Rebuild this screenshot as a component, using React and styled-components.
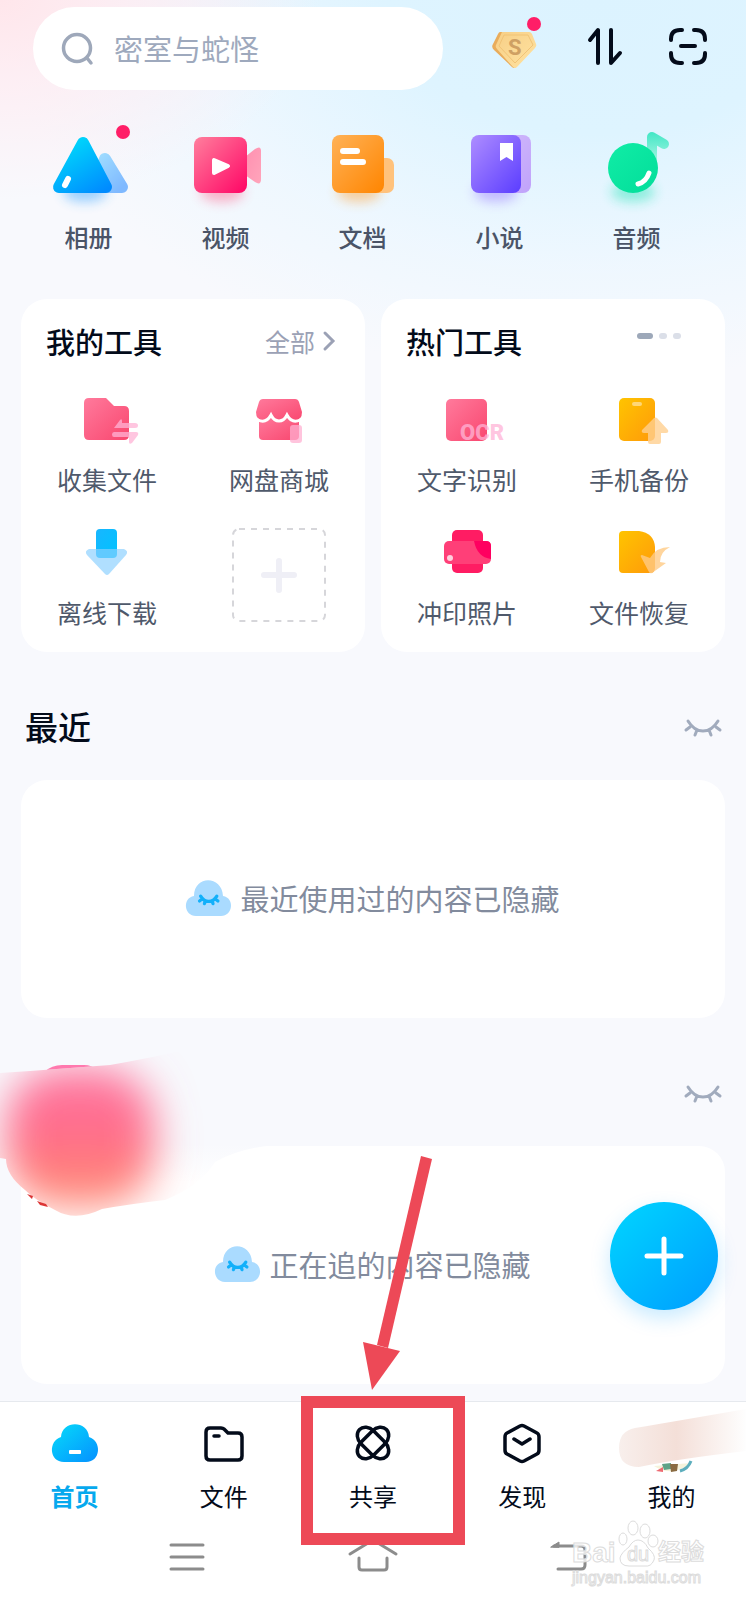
import React from 'react';
import styled, { createGlobalStyle } from 'styled-components';

const GlobalStyle = createGlobalStyle`
  * {
    box-sizing: border-box;
  }

  body {
    margin: 0;
    background: #f8f9fd;
    font-family: 'Noto Sans CJK SC', 'Liberation Sans', sans-serif;
    color: #030b1a;
  }

  button,
  input {
    margin: 0;
    padding: 0;
    border: 0;
    background: none;
    font-family: inherit;
    color: inherit;
  }

  svg {
    display: block;
    flex-shrink: 0;
    overflow: visible;
  }
`;

const Page = styled.div`
  min-height: 100vh;
  display: flex;
  flex-direction: column;
  background:
    radial-gradient(ellipse 320px 200px at 0 0, #ffe6eb 0%, rgba(255, 235, 241, 0.75) 40%, rgba(250, 246, 251, 0) 100%) no-repeat,
    radial-gradient(ellipse 80% 380px at 80% 0, #dcf3ff 0%, #def4ff 35%, rgba(236, 247, 255, 0.8) 70%, rgba(248, 249, 253, 0) 100%) no-repeat,
    #f8f9fd;
`;

const Header = styled.header`
  padding: 7px 39px 0 33px;
  display: flex;
  align-items: center;
`;

const SearchBox = styled.label`
  height: 83px;
  margin-right: 44px;
  padding: 0 28px;
  flex: 1;
  display: flex;
  align-items: center;
  gap: 19px;
  border-radius: 42px;
  background: white;
`;

const SearchInput = styled.input`
  width: 100%;
  min-width: 0;
  height: 42px;
  padding-bottom: 2px;
  outline: none;
  font-size: 29px;

  &::placeholder {
    color: #9ea9bd;
    opacity: 1;
  }
`;

const HeaderActions = styled.div`
  display: flex;
  gap: 45px;
`;

const IconButton = styled.button`
  display: block;
  cursor: pointer;
`;

const Categories = styled.nav`
  padding: 33px 41px 0 20px;
  display: grid;
  grid-template-columns: repeat(5, 1fr);
`;

const CategoryLink = styled.a`
  display: flex;
  flex-direction: column;
  align-items: center;
  gap: 15px;
  font-size: 24px;
  line-height: 30px;
  font-weight: 500;
  color: #4a5467;
  text-decoration: none;
`;

const ToolCards = styled.div`
  padding: 47px 21px 0;
  display: grid;
  grid-template-columns: 1fr 1fr;
  gap: 16px;
`;

const ToolCard = styled.section`
  padding: 24px 0 25px;
  border-radius: 26px;
  background: white;
`;

const ToolCardHeader = styled.div`
  height: 36px;
  padding: 0 ${(props) => props.$right}px 0 25px;
  display: flex;
  align-items: center;
  justify-content: space-between;
`;

const ToolCardTitle = styled.h2`
  margin: 0;
  font-size: 29px;
  line-height: 36px;
  font-weight: 500;
`;

const AllLink = styled.a`
  display: flex;
  align-items: center;
  gap: 8px;
  font-size: 25px;
  line-height: 36px;
  color: #9ba1b5;
  text-decoration: none;
`;

const PageDots = styled.div`
  height: 26px;
  display: flex;
  align-items: center;
  align-self: flex-start;
  gap: 6px;
`;

const PageDot = styled.span`
  width: ${(props) => (props.$active ? 16 : 8)}px;
  height: 6px;
  border-radius: 3px;
  background: ${(props) => (props.$active ? '#9da8b9' : '#dbdfe8')};
`;

const ToolGrid = styled.div`
  margin-top: 31px;
  display: grid;
  grid-template-columns: 1fr 1fr;
  row-gap: 29px;
  justify-items: center;
`;

const ToolLink = styled.a`
  display: flex;
  flex-direction: column;
  align-items: center;
  gap: 14px;
  font-size: 25px;
  line-height: 30px;
  color: #4f596b;
  text-decoration: none;
`;

const AddTool = styled.button`
  width: 94px;
  height: 94px;
  margin-top: 5px;
  cursor: pointer;
`;

const Section = styled.section`
  position: relative;
  padding: 56px 21px 0;
`;

const SectionHeader = styled.div`
  min-height: 40px;
  margin-bottom: 32px;
  padding: 0 4px;
  display: flex;
  align-items: center;
  justify-content: space-between;
`;

const SectionTitle = styled.h2`
  margin: 0;
  align-self: flex-start;
  font-size: 33px;
  line-height: 36px;
  font-weight: 500;
`;

const HiddenCard = styled.div`
  height: 238px;
  padding-bottom: 2px;
  display: flex;
  align-items: center;
  justify-content: center;
  gap: 9px;
  border-radius: 26px;
  background: white;
  font-size: 29px;
  color: #828b9d;
`;

const Blob = styled.svg`
  position: absolute;
  left: 0;
  top: 42px;
`;

const AddButton = styled.button`
  position: fixed;
  right: 28px;
  bottom: 290px;
  width: 108px;
  height: 108px;
  display: flex;
  align-items: center;
  justify-content: center;
  border-radius: 50%;
  background: linear-gradient(135deg, #00d0ff 10%, #00a2ff 90%);
  box-shadow: 0 8px 20px rgba(0, 160, 255, 0.22);
  cursor: pointer;
`;

const BottomBar = styled.footer`
  position: relative;
  margin-top: auto;
  padding-bottom: 21px;
  border-top: 1px solid #e6e9ee;
  background: white;
`;

const Tabs = styled.nav`
  padding: 21px 0 24px;
  display: grid;
  grid-template-columns: repeat(5, 1fr);
`;

const TabLink = styled.a`
  position: relative;
  display: flex;
  flex-direction: column;
  align-items: center;
  gap: 18px;
  font-size: 24px;
  line-height: 30px;
  font-weight: ${(props) => (props.$active ? 700 : 400)};
  color: ${(props) => (props.$active ? '#06a9ee' : '#030b1a')};
  text-decoration: none;
`;

const Pointer = styled.svg`
  position: absolute;
  left: calc(50% - 72px);
  bottom: -34px;
  z-index: 2;
  pointer-events: none;
`;

const SystemBar = styled.div`
  padding: 0 94px;
  display: grid;
  grid-template-columns: repeat(3, 1fr);
  justify-items: center;
`;

const Watermark = styled.svg`
  position: absolute;
  right: 36px;
  bottom: 14px;
  pointer-events: none;
`;

const Gradient = ({ id, from, to }) => (
  <linearGradient id={id} x1="0" y1="0" x2="1" y2="1">
    <stop offset="0" stopColor={from} />
    <stop offset="1" stopColor={to} />
  </linearGradient>
);

const Defs = styled.svg`
  position: absolute;
`;

const Gradients = () => (
  <Defs width="0" height="0" aria-hidden="true">
    <defs>
      <linearGradient id="sky" gradientUnits="userSpaceOnUse" x1="25" y1="20" x2="56" y2="70">
        <stop offset="0" stopColor="#00d5fb" />
        <stop offset="1" stopColor="#008bff" />
      </linearGradient>
      <Gradient id="skyPale" from="#9fdcff" to="#7fb9ff" />
      <Gradient id="rose" from="#ff7f9d" to="#ff0565" />
      <Gradient id="roseSoft" from="#ff7a9c" to="#f9476f" />
      <Gradient id="rosePale" from="#ff8fb0" to="#ffa5bb" />
      <Gradient id="orange" from="#ffb257" to="#ff8500" />
      <Gradient id="violet" from="#ae8dff" to="#5b3dff" />
      <Gradient id="violetPale" from="#d2bdfb" to="#c0a2fb" />
      <Gradient id="mint" from="#10eda6" to="#03dd9a" />
      <linearGradient id="mintFade" gradientUnits="userSpaceOnUse" x1="60" y1="8" x2="60" y2="40">
        <stop offset="0" stopColor="#3fe6c4" />
        <stop offset="1" stopColor="#a9f6e4" />
      </linearGradient>
      <Gradient id="amber" from="#ffc400" to="#ff9a0a" />
      <Gradient id="azure" from="#18b6ff" to="#00c3ff" />
      <Gradient id="cloud" from="#06dcfa" to="#0590ff" />
      <Gradient id="gold" from="#f7cf86" to="#ffe3a2" />
      <filter id="glow" x="-50%" y="-100%" width="200%" height="300%">
        <feGaussianBlur stdDeviation="6" />
      </filter>
    </defs>
  </Defs>
);

const Glow = ({ color }) => (
  <ellipse cx="40" cy="69" rx="22" ry="10" fill={color} opacity="0.45" filter="url(#glow)" />
);

const SearchIcon = () => (
  <svg width="34" height="34" viewBox="0 0 34 34" fill="none" stroke="#9ea8ba" strokeWidth="3.500" strokeLinecap="round">
    <circle cx="16" cy="16" r="13.500" />
    <path d="M26 26l4 5" />
  </svg>
);

const DiamondIcon = () => (
  <svg width="56" height="61" viewBox="0 0 56 61">
    <path d="M13 14h29l6 12q1 2-1 4L29 49q-2 2-4 0L7 32q-3-3-1-6l5-10q1-2 2-2z" fill="#e9ac5b" />
    <path d="M15 14h27q2 0 3 2l4 10q1 2-1 4L30 49q-2 2-4 0L10 31q-2-2-1-4z" fill="url(#gold)" />
    <path d="M17 17h24l5 10-18 18-16-17z" fill="none" stroke="#f0c377" strokeWidth="1" />
    <text x="21" y="37" fontFamily="Roboto, sans-serif" fontSize="22" fontWeight="700" fill="#cfa063">S</text>
    <circle cx="47" cy="6" r="7" fill="#ff1e67" />
  </svg>
);

const TransferIcon = () => (
  <svg width="36" height="61" viewBox="0 0 36 61" fill="none" stroke="#030b1a" strokeWidth="4" strokeLinecap="round" strokeLinejoin="round">
    <path d="M2 22L10 12V45M23 12V45L32 35" />
  </svg>
);

const ScanIcon = () => (
  <svg width="38" height="61" viewBox="0 0 38 61" fill="none" stroke="#030b1a" strokeWidth="4" strokeLinecap="round">
    <path d="M2 22v-1q0-9 9-9h2M25 12h2q9 0 9 9v1M36 35v1q0 9-9 9h-2M13 45h-2q-9 0-9-9v-1M12 28h14" />
  </svg>
);

const AlbumIcon = () => (
  <svg width="88" height="84" viewBox="0 0 88 84">
    <Glow color="#2b9dff" />
    <path d="M60 36L50 64H77z" fill="url(#skyPale)" stroke="url(#skyPale)" strokeWidth="12" strokeLinejoin="round" />
    <path d="M38 20L14 64H61z" fill="url(#sky)" stroke="url(#sky)" strokeWidth="12" strokeLinejoin="round" />
    <path d="M20 62l3-6" stroke="white" strokeWidth="6" strokeLinecap="round" />
    <circle cx="78" cy="9" r="7" fill="#ff1e67" />
  </svg>
);

const VideoIcon = () => (
  <svg width="88" height="84" viewBox="0 0 88 84">
    <Glow color="#ff5c86" />
    <path d="M63 34l10-8q6-4 6 2v28q0 7-6 3l-10-7z" fill="url(#rosePale)" />
    <rect x="12" y="14" width="53" height="56" rx="8" fill="url(#rose)" />
    <path d="M32 37v13l14-7z" fill="white" stroke="white" strokeWidth="4" strokeLinejoin="round" />
  </svg>
);

const DocIcon = () => (
  <svg width="88" height="84" viewBox="0 0 88 84">
    <Glow color="#ff9c2b" />
    <rect x="45" y="35" width="30" height="35" rx="7" fill="#ffc27c" />
    <rect x="13" y="12" width="52" height="58" rx="8" fill="url(#orange)" />
    <path d="M24 28h14M24 39h20" stroke="white" strokeWidth="6" strokeLinecap="round" />
  </svg>
);

const NovelIcon = () => (
  <svg width="88" height="84" viewBox="0 0 88 84">
    <Glow color="#9470ff" />
    <rect x="35" y="12" width="40" height="58" rx="8" fill="url(#violetPale)" />
    <rect x="15" y="12" width="50" height="58" rx="8" fill="url(#violet)" />
    <path d="M44 20h13v18l-6.500-4-6.500 4z" fill="white" />
  </svg>
);

const AudioIcon = () => (
  <svg width="88" height="84" viewBox="0 0 88 84">
    <Glow color="#1fe3b4" />
    <path d="M59 42V14L71 21" fill="none" stroke="url(#mintFade)" strokeWidth="10" strokeLinecap="round" strokeLinejoin="round" />
    <circle cx="40" cy="45" r="25" fill="url(#mint)" />
    <path d="M45 61q8-2 11-11" fill="none" stroke="white" strokeWidth="5" strokeLinecap="round" />
  </svg>
);

const CollectIcon = () => (
  <svg width="72" height="60" viewBox="0 0 72 60">
    <path d="M18 8h17l8 8h10q5 0 5 5v24q0 5-5 5H18q-5 0-5-5V13q0-5 5-5z" fill="url(#roseSoft)" />
    <path d="M43 38l6-8q2-2 2 1v2h13q3 0 3 2.500t-3 2.500zM43 42h22q3 0 2 3l-6 8q-3 2-3-1v-5H43q-2 0-2-2.500t2-2.500z" fill="#ffb3d6" fillOpacity="0.75" />
  </svg>
);

const ShopIcon = () => (
  <svg width="72" height="60" viewBox="0 0 72 60">
    <path d="M16 26h40v20q0 4-4 4H20q-4 0-4-4z" fill="url(#roseSoft)" />
    <path
      d="M20 9h32q3 0 4 3l3 10q0 8-7 8-5 0-8-5-3 6-8 6t-8-6q-3 5-8 5-7 0-7-8l3-10q1-3 4-3z"
      fill="url(#roseSoft)"
    />
    <path d="M15 30q8 4 13-5 3 6 8 6t8-6q5 9 13 5" fill="none" stroke="white" strokeWidth="3" strokeLinecap="round" />
    <rect x="47" y="35" width="12" height="18" rx="3" fill="#ffb0d2" fillOpacity="0.75" />
  </svg>
);

const DownloadIcon = () => (
  <svg width="72" height="60" viewBox="0 0 72 60">
    <rect x="25" y="6" width="21" height="29" rx="4" fill="url(#azure)" />
    <path d="M18 26h35q5 2 2 6L38 51q-2 2-4 0L16 32q-3-4 2-6z" fill="#8bd0ff" fillOpacity="0.68" />
  </svg>
);

const OcrIcon = () => (
  <svg width="72" height="60" viewBox="0 0 72 60">
    <rect x="15" y="9" width="41" height="42" rx="5" fill="url(#roseSoft)" />
    <text x="29" y="50" fontFamily="Roboto, sans-serif" fontSize="22" fontWeight="900" fill="#ffb3d6" fillOpacity="0.75">OCR</text>
  </svg>
);

const BackupIcon = () => (
  <svg width="72" height="60" viewBox="0 0 72 60">
    <rect x="16" y="8" width="36" height="43" rx="5" fill="url(#amber)" />
    <rect x="29" y="12" width="10" height="4" rx="2" fill="#ffd777" />
    <path d="M51 28q2-1 3 0l11 12q1 3-2 3h-5v9q0 2-2 2H47q-2 0-2-2v-9h-4q-3 0-2-3z" fill="#ffcf90" fillOpacity="0.8" />
  </svg>
);

const PrintIcon = () => (
  <svg width="72" height="60" viewBox="0 0 72 60">
    <rect x="21" y="7" width="31" height="43" rx="5" fill="#ff1c63" />
    <rect x="13" y="18" width="47" height="23" rx="5" fill="#ff3f78" />
    <path d="M43 18h12q5 0 5 5v13q-14-2-17-18z" fill="#ff0060" />
    <circle cx="19" cy="35" r="3" fill="#ffd0de" />
  </svg>
);

const RestoreIcon = () => (
  <svg width="72" height="60" viewBox="0 0 72 60">
    <path d="M20 8h16q15 2 16 16v21q0 5-5 5H20q-4 0-4-4V12q0-4 4-4z" fill="url(#amber)" />
    <path d="M39 32l8 3q6-11 20-11-10 5-10 15l6 1-14 10q-2 1-3-1l-8-15q-1-2 1-2z" fill="#ffcb84" fillOpacity="0.8" />
  </svg>
);

const AddToolIcon = () => (
  <svg width="94" height="94" viewBox="0 0 94 94" fill="none">
    <rect x="1" y="1" width="92" height="92" rx="6" stroke="#d6d6da" strokeWidth="2" strokeDasharray="6 6" />
    <path d="M47 33v29M32 47h30" stroke="#efeff6" strokeWidth="6" strokeLinecap="round" />
  </svg>
);

const ClosedEye = () => (
  <path d="M3 2q6 10 15 10T33 2M5 8l-4 3M12 11l-2 5M24 11l2 5M31 8l4 3" />
);

const EyeIcon = () => (
  <svg width="36" height="18" viewBox="0 0 36 18" fill="none" stroke="#a1abbd" strokeWidth="3" strokeLinecap="round">
    <ClosedEye />
  </svg>
);

const SleepyCloud = () => (
  <svg width="45" height="36" viewBox="0 0 45 36">
    <path d="M10 36C-2 36-4 18 8 16 8-5 36-5 37 16c12 2 10 20-2 20z" fill="#aadbff" />
    <g transform="translate(13 15) scale(0.54)" fill="none" stroke="#12b0fa" strokeWidth="6" strokeLinecap="round">
      <ClosedEye />
    </g>
  </svg>
);

const HomeIcon = () => (
  <svg width="48" height="40" viewBox="0 0 48 40">
    <path d="M13 39C-2 39-3 18 10 14 11-3 37-3 38 14c13 4 12 25-3 25z" fill="url(#cloud)" />
    <rect x="18" y="27" width="12" height="4" rx="1" fill="white" />
  </svg>
);

const FilesIcon = () => (
  <svg width="48" height="40" viewBox="0 0 48 40" fill="none" stroke="#030b1a" strokeWidth="3.500" strokeLinecap="round" strokeLinejoin="round">
    <path d="M10 5h11q2 0 3 1l4 4h10q4 0 4 4v19q0 4-4 4H10q-4 0-4-4V9q0-4 4-4zM14 13h5" />
  </svg>
);

const ShareIcon = () => (
  <svg width="48" height="40" viewBox="0 0 48 40" fill="none" stroke="#030b1a" strokeWidth="3.500">
    <rect x="5" y="11" width="38" height="18" rx="11" ry="9" transform="rotate(45 24 20)" />
    <rect x="5" y="11" width="38" height="18" rx="11" ry="9" transform="rotate(-45 24 20)" />
  </svg>
);

const DiscoverIcon = () => (
  <svg width="48" height="40" viewBox="0 0 48 40" fill="none" stroke="#030b1a" strokeWidth="3.500" strokeLinecap="round" strokeLinejoin="round">
    <path d="M22 3q2-1 4 0l13 7q2 1 2 4v13q0 3-2 4l-13 7q-2 1-4 0L9 31q-2-1-2-4V14q0-3 2-4zM16 16l8 5 8-5" />
  </svg>
);

const AvatarIcon = () => (
  <svg width="48" height="40" viewBox="0 0 48 40">
    <defs>
      <linearGradient id="smudge" x1="0" y1="0" x2="1" y2="0">
        <stop offset="0" stopColor="#f8efec" />
        <stop offset="0.45" stopColor="#f4dfd8" />
        <stop offset="1" stopColor="#fefefe" />
      </linearGradient>
    </defs>
    <path d="M7 43q18 12 37-3z" fill="#f6f3dc" />
    <path d="M9 48l7-4v5z" fill="#ee6a72" />
    <path d="M15 41l9-1v6l-7 1z" fill="#5fa287" />
    <path d="M23 41h8l-1 7-6 1z" fill="#8a6b42" />
    <path d="M33 48q8-2 11-10" fill="none" stroke="#5daebd" strokeWidth="3" />
    <path d="M-12 5Q30-2 99-14V28Q30 36-8 44-28 44-28 25-28 8-12 5z" fill="url(#smudge)" />
  </svg>
);

const BlurredPatch = () => (
  <Blob width="270" height="170" viewBox="0 0 270 170" aria-hidden="true">
    <defs>
      <clipPath id="patchClip">
        <path d="M0 13L30 11 110 5Q150-2 175-8L275-20V85Q240 88 215 102 200 126 165 140 130 144 102 149 75 162 55 150 35 140 25 130 6 115 6 99L0 98z" />
      </clipPath>
      <linearGradient id="patchBase" x1="0" y1="0" x2="0" y2="1">
        <stop offset="0.55" stopColor="#f8f9fd" />
        <stop offset="0.75" stopColor="white" />
      </linearGradient>
      <linearGradient id="patchColor" x1="0" y1="0" x2="0" y2="1">
        <stop offset="0" stopColor="#ff75a0" />
        <stop offset="0.45" stopColor="#ff6c8c" />
        <stop offset="0.8" stopColor="#ff8177" />
        <stop offset="1" stopColor="#ff9b86" />
      </linearGradient>
      <filter id="patchBlur" x="-50%" y="-50%" width="200%" height="200%">
        <feGaussianBlur stdDeviation="21" />
      </filter>
    </defs>
    <path d="M44 12q8-7 18-7h22q8 0 13 5z" fill="#ff79ae" />
    <g clipPath="url(#patchClip)">
      <rect y="-20" width="275" height="190" fill="url(#patchBase)" />
      <rect x="6" y="8" width="148" height="140" rx="56" fill="url(#patchColor)" filter="url(#patchBlur)" />
    </g>
    <path d="M27 134l6 2-1 3zM37 141l9 3 2 3-8-2z" fill="#dc3535" />
  </Blob>
);

// red frame and arrow that point at the share tab
const SharePointer = () => (
  <Pointer width="164" height="389" viewBox="0 0 164 389" aria-hidden="true">
    <path d="M120 0l11 3L87 192l-11-3z" fill="#ed4957" />
    <path d="M62 186l37 9-28 39z" fill="#ed4957" />
    <rect x="6" y="246" width="152" height="137" fill="none" stroke="#ed4957" strokeWidth="12" />
  </Pointer>
);

const BaiduWatermark = () => (
  <Watermark width="138" height="66" viewBox="0 0 138 66" fill="white" fillOpacity="0.8" stroke="#dcdcdc" strokeWidth="1" role="img" aria-label="Baidu 经验">
    <text x="0" y="42" fontFamily="Liberation Sans, sans-serif" fontSize="28" fontWeight="700">Bai</text>
    <ellipse cx="51" cy="19" rx="4" ry="6" />
    <ellipse cx="61" cy="8" rx="5" ry="7" />
    <ellipse cx="73" cy="11" rx="5" ry="7" />
    <ellipse cx="81" cy="21" rx="5" ry="6" />
    <path d="M66 20q6 0 10 8 8 7 6 12-3 7-9 6H57q-9 0-9-8 1-5 9-11 4-7 9-7z" />
    <text x="55" y="41" fontFamily="Liberation Sans, sans-serif" fontSize="20">du</text>
    <text x="86" y="40" fontFamily="Noto Sans CJK SC, sans-serif" fontSize="23" fontWeight="700">经验</text>
    <text x="0" y="63" fontFamily="Liberation Sans, sans-serif" fontSize="16">jingyan.baidu.com</text>
  </Watermark>
);

const categories = [
  { label: '相册', Icon: AlbumIcon },
  { label: '视频', Icon: VideoIcon },
  { label: '文档', Icon: DocIcon },
  { label: '小说', Icon: NovelIcon },
  { label: '音频', Icon: AudioIcon },
];

const myTools = [
  { label: '收集文件', Icon: CollectIcon },
  { label: '网盘商城', Icon: ShopIcon },
  { label: '离线下载', Icon: DownloadIcon },
];

const hotTools = [
  { label: '文字识别', Icon: OcrIcon },
  { label: '手机备份', Icon: BackupIcon },
  { label: '冲印照片', Icon: PrintIcon },
  { label: '文件恢复', Icon: RestoreIcon },
];

const tabs = [
  { label: '首页', Icon: HomeIcon, active: true },
  { label: '文件', Icon: FilesIcon },
  { label: '共享', Icon: ShareIcon, pointed: true },
  { label: '发现', Icon: DiscoverIcon },
  { label: '我的', Icon: AvatarIcon },
];

const App = () => {
  const renderTools = (tools) => tools.map(({ label, Icon }) => (
    <ToolLink href="#" key={label}>
      <Icon />
      {label}
    </ToolLink>
  ));

  return (
    <>
      <GlobalStyle />
      <Gradients />
      <Page>
        <Header>
          <SearchBox>
            <SearchIcon />
            <SearchInput type="text" placeholder="密室与蛇怪" aria-label="搜索" />
          </SearchBox>
          <HeaderActions>
            <IconButton type="button" aria-label="会员"><DiamondIcon /></IconButton>
            <IconButton type="button" aria-label="传输列表"><TransferIcon /></IconButton>
            <IconButton type="button" aria-label="扫一扫"><ScanIcon /></IconButton>
          </HeaderActions>
        </Header>

        <Categories>
          {categories.map(({ label, Icon }) => (
            <CategoryLink href="#" key={label}>
              <Icon />
              {label}
            </CategoryLink>
          ))}
        </Categories>

        <ToolCards>
          <ToolCard>
            <ToolCardHeader $right={30}>
              <ToolCardTitle>我的工具</ToolCardTitle>
              <AllLink href="#">
                全部
                <svg width="12" height="20" viewBox="0 0 12 20" fill="none" stroke="#9ba1b5" strokeWidth="3" strokeLinecap="round">
                  <path d="M2 2l8 8-8 8" />
                </svg>
              </AllLink>
            </ToolCardHeader>
            <ToolGrid>
              {renderTools(myTools)}
              <AddTool type="button" aria-label="添加工具"><AddToolIcon /></AddTool>
            </ToolGrid>
          </ToolCard>
          <ToolCard>
            <ToolCardHeader $right={44}>
              <ToolCardTitle>热门工具</ToolCardTitle>
              <PageDots>
                <PageDot $active />
                <PageDot />
                <PageDot />
              </PageDots>
            </ToolCardHeader>
            <ToolGrid>{renderTools(hotTools)}</ToolGrid>
          </ToolCard>
        </ToolCards>

        <Section>
          <SectionHeader>
            <SectionTitle>最近</SectionTitle>
            <IconButton type="button" aria-label="显示最近"><EyeIcon /></IconButton>
          </SectionHeader>
          <HiddenCard>
            <SleepyCloud />
            最近使用过的内容已隐藏
          </HiddenCard>
        </Section>

        <Section>
          <SectionHeader>
            <span />
            <IconButton type="button" aria-label="显示正在追"><EyeIcon /></IconButton>
          </SectionHeader>
          <HiddenCard>
            <SleepyCloud />
            正在追的内容已隐藏
          </HiddenCard>
          <BlurredPatch />
        </Section>

        <AddButton type="button" aria-label="新建">
          <svg width="40" height="40" viewBox="0 0 40 40" stroke="white" strokeWidth="5" strokeLinecap="round">
            <path d="M20 3v34M3 20h34" />
          </svg>
        </AddButton>

        <BottomBar>
          <Tabs>
            {tabs.map(({
              label, Icon, active, pointed,
            }) => (
              <TabLink href="#" $active={active} key={label}>
                <Icon />
                {label}
                {pointed && <SharePointer />}
              </TabLink>
            ))}
          </Tabs>
          <SystemBar>
            <IconButton type="button" aria-label="菜单">
              <svg width="60" height="44" viewBox="0 0 60 44" stroke="#8c8c8c" strokeWidth="3" strokeLinecap="round">
                <path d="M14 10h32M14 22h32M14 34h32" />
              </svg>
            </IconButton>
            <IconButton type="button" aria-label="主屏幕">
              <svg width="60" height="44" viewBox="0 0 60 44" fill="none" stroke="#8c8c8c" strokeWidth="3" strokeLinecap="round" strokeLinejoin="round">
                <path d="M7 19L30 5l23 14M16 23v9q0 3 3 3h22q3 0 3-3v-9" />
              </svg>
            </IconButton>
            <IconButton type="button" aria-label="返回">
              <svg width="60" height="44" viewBox="0 0 60 44" fill="none" stroke="#8c8c8c" strokeWidth="3" strokeLinecap="round">
                <path d="M25 11h27q4 0 4 4v15q0 4-4 4H29" />
                <path d="M22 12l8-5v5z" fill="#8c8c8c" strokeWidth="1" />
              </svg>
            </IconButton>
          </SystemBar>
          <BaiduWatermark />
        </BottomBar>
      </Page>
    </>
  );
};

export default App;
